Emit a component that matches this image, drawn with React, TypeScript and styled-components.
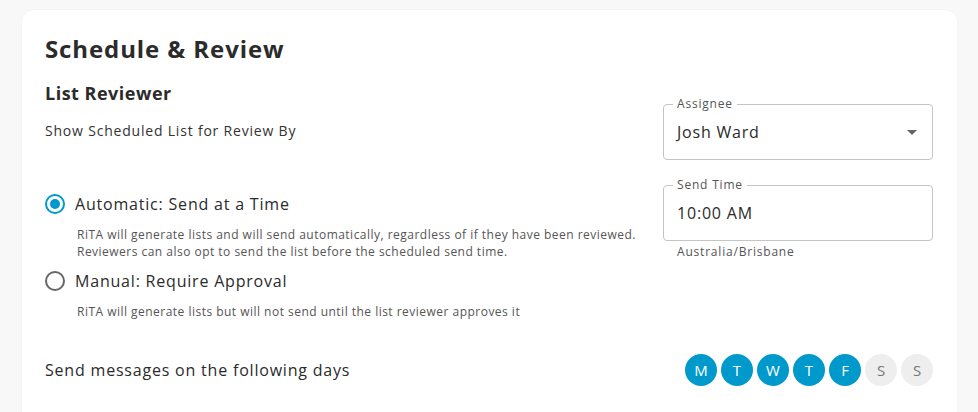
import React, { useState } from "react";
import styled, { createGlobalStyle } from "styled-components";

const GlobalStyle = createGlobalStyle`
  html, body {
    margin: 0;
    padding: 0;
    background: #f8f8f8;
    font-family: "Open Sans", "Liberation Sans", sans-serif;
    letter-spacing: 0.05em;
    color: #2b2b2b;
  }
  * { box-sizing: border-box; }
`;

const DAYS = [
  { key: "mon", label: "M", on: true },
  { key: "tue", label: "T", on: true },
  { key: "wed", label: "W", on: true },
  { key: "thu", label: "T", on: true },
  { key: "fri", label: "F", on: true },
  { key: "sat", label: "S", on: false },
  { key: "sun", label: "S", on: false },
];

export default function App() {
  const [mode, setMode] = useState<"auto" | "manual">("auto");
  const [days, setDays] = useState(DAYS);

  const toggleDay = (key: string) =>
    setDays((d) => d.map((x) => (x.key === key ? { ...x, on: !x.on } : x)));

  return (
    <>
      <GlobalStyle />
      <Page>
        <Card>
          <Title>Schedule &amp; Review</Title>
          <Columns>
            <LeftCol>
              <SubTitle>List Reviewer</SubTitle>
              <Prompt>Show Scheduled List for Review By</Prompt>

              <RadioRow onClick={() => setMode("auto")}>
                <Radio checked={mode === "auto"} />
                <RadioLabel>Automatic: Send at a Time</RadioLabel>
              </RadioRow>
              <Hint>
                RiTA will generate lists and will send automatically, regardless of if they have been reviewed.
                <br />
                Reviewers can also opt to send the list before the scheduled send time.
              </Hint>

              <RadioRow onClick={() => setMode("manual")}>
                <Radio checked={mode === "manual"} />
                <RadioLabel>Manual: Require Approval</RadioLabel>
              </RadioRow>
              <Hint>RiTA will generate lists but will not send until the list reviewer approves it</Hint>
            </LeftCol>

            <RightCol>
              <Field>
                <Legend>Assignee</Legend>
                <FieldValue>Josh Ward</FieldValue>
                <Caret />
              </Field>
              <Field>
                <Legend>Send Time</Legend>
                <FieldValue>10:00 AM</FieldValue>
              </Field>
              <Helper>Australia/Brisbane</Helper>
            </RightCol>
          </Columns>

          <DaysRow>
            <DaysLabel>Send messages on the following days</DaysLabel>
            <DayList>
              {days.map((d) => (
                <Day key={d.key} on={d.on} onClick={() => toggleDay(d.key)}>
                  {d.label}
                </Day>
              ))}
            </DayList>
          </DaysRow>
        </Card>
      </Page>
    </>
  );
}

const Page = styled.div`
  width: 978px;
  height: 412px;
  overflow: hidden;
  padding: 10px 21px 0 22px;
`;

const Card = styled.div`
  background: #fff;
  border-radius: 12px;
  box-shadow: 0 0 2px rgba(0, 0, 0, 0.06);
  padding: 24px 24px 40px 23px;
  min-height: 440px;
`;

const Title = styled.h1`
  margin: 0;
  font-size: 24px;
  line-height: 29px;
  font-weight: 700;
  letter-spacing: 0.9px;
  color: #2b2b2b;
`;

const Columns = styled.div`
  display: flex;
  justify-content: space-between;
  margin-top: 18px;
`;

const LeftCol = styled.div`
  flex: 1;
`;

const RightCol = styled.div`
  width: 270px;
  padding-top: 23px;
`;

const SubTitle = styled.h2`
  margin: 0;
  font-size: 18px;
  line-height: 24px;
  font-weight: 700;
  letter-spacing: 0.5px;
`;

const Prompt = styled.p`
  margin: 16px 0 0;
  font-size: 14px;
  line-height: 20px;
  color: #333;
`;

const RadioRow = styled.label`
  display: flex;
  align-items: center;
  gap: 10px;
  height: 24px;
  margin-top: 51px;
  cursor: pointer;

  & + p + & {
    margin-top: 9px;
  }
`;

const Radio = styled.span<{ checked: boolean }>`
  width: 20px;
  height: 20px;
  border-radius: 50%;
  border: 2px solid ${(p) => (p.checked ? "#0099cc" : "#666")};
  display: flex;
  align-items: center;
  justify-content: center;

  &::after {
    content: "";
    width: 10px;
    height: 10px;
    border-radius: 50%;
    background: ${(p) => (p.checked ? "#0099cc" : "transparent")};
  }
`;

const RadioLabel = styled.span`
  font-size: 16px;
  color: #2b2b2b;
`;

const Hint = styled.p`
  margin: 11px 0 0 32px;
  font-size: 12px;
  line-height: 16.5px;
  letter-spacing: 0.04em;
  color: #555;
`;

const Field = styled.div`
  position: relative;
  height: 56px;
  border: 1px solid #c4c4c4;
  border-radius: 4px;
  display: flex;
  align-items: center;
  padding: 0 14px 0 13px;

  & + & {
    margin-top: 25px;
  }
`;

const Legend = styled.span`
  position: absolute;
  top: -8px;
  left: 9px;
  padding: 0 4px;
  background: #fff;
  font-size: 12px;
  line-height: 14px;
  color: #555;
`;

const FieldValue = styled.span`
  flex: 1;
  font-size: 16px;
  color: #2b2b2b;
`;

const Caret = styled.span`
  width: 0;
  height: 0;
  border-left: 5px solid transparent;
  border-right: 5px solid transparent;
  border-top: 5px solid #666;
  margin-right: 1px;
`;

const Helper = styled.div`
  margin: 4px 0 0 14px;
  font-size: 12px;
  line-height: 14px;
  color: #555;
`;

const DaysRow = styled.div`
  display: flex;
  justify-content: space-between;
  align-items: center;
  margin-top: 33px;
`;

const DaysLabel = styled.span`
  font-size: 16px;
  color: #2b2b2b;
`;

const DayList = styled.div`
  display: flex;
  gap: 4px;
`;

const Day = styled.button<{ on: boolean }>`
  width: 32px;
  height: 32px;
  border-radius: 50%;
  border: none;
  padding: 0;
  font-family: inherit;
  font-size: 15px;
  letter-spacing: 0;
  cursor: pointer;
  background: ${(p) => (p.on ? "#0099cc" : "#eeeeee")};
  color: ${(p) => (p.on ? "#fff" : "#777")};
`;
